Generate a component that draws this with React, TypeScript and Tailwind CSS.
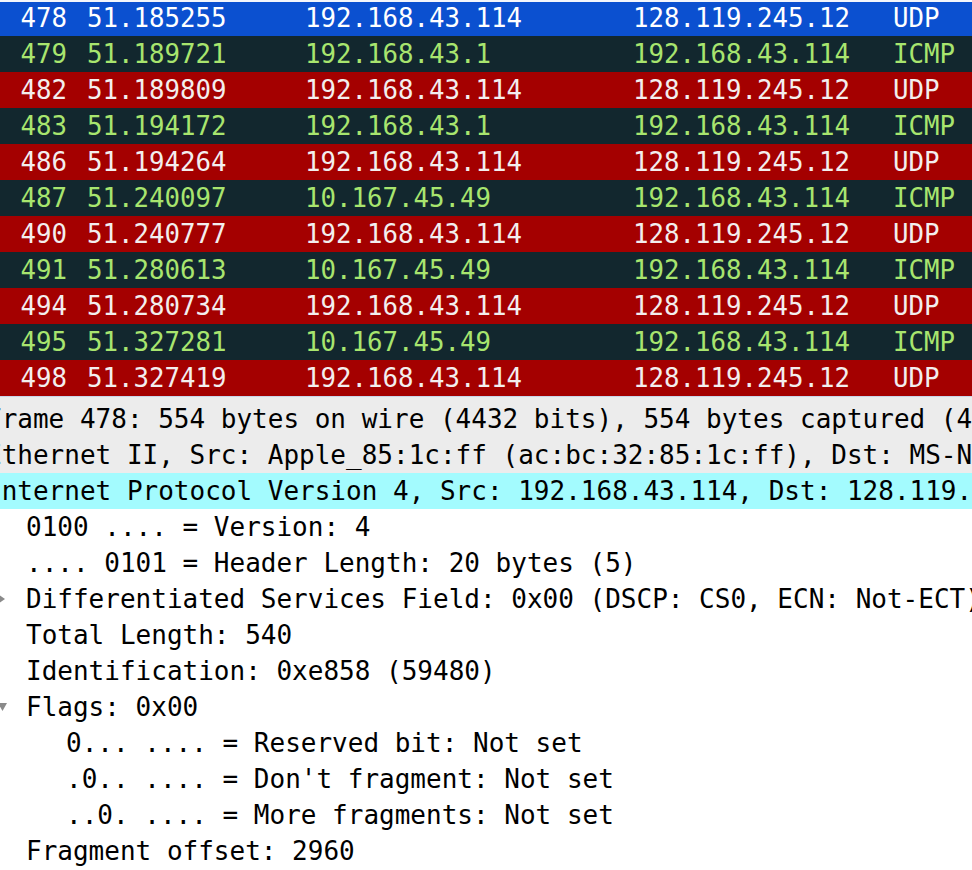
import React from "react";

type Packet = {
  no: string;
  time: string;
  src: string;
  dst: string;
  proto: string;
};

const packets: Packet[] = [
  { no: "478", time: "51.185255", src: "192.168.43.114", dst: "128.119.245.12", proto: "UDP" },
  { no: "479", time: "51.189721", src: "192.168.43.1", dst: "192.168.43.114", proto: "ICMP" },
  { no: "482", time: "51.189809", src: "192.168.43.114", dst: "128.119.245.12", proto: "UDP" },
  { no: "483", time: "51.194172", src: "192.168.43.1", dst: "192.168.43.114", proto: "ICMP" },
  { no: "486", time: "51.194264", src: "192.168.43.114", dst: "128.119.245.12", proto: "UDP" },
  { no: "487", time: "51.240097", src: "10.167.45.49", dst: "192.168.43.114", proto: "ICMP" },
  { no: "490", time: "51.240777", src: "192.168.43.114", dst: "128.119.245.12", proto: "UDP" },
  { no: "491", time: "51.280613", src: "10.167.45.49", dst: "192.168.43.114", proto: "ICMP" },
  { no: "494", time: "51.280734", src: "192.168.43.114", dst: "128.119.245.12", proto: "UDP" },
  { no: "495", time: "51.327281", src: "10.167.45.49", dst: "192.168.43.114", proto: "ICMP" },
  { no: "498", time: "51.327419", src: "192.168.43.114", dst: "128.119.245.12", proto: "UDP" },
];

// tree lines of the packet details pane
type Line = {
  text: string;
  level: number;
  arrow?: "right" | "down";
  bg?: string;
};

const details: Line[] = [
  { text: "Frame 478: 554 bytes on wire (4432 bits), 554 bytes captured (4432 bits) on interface 0", level: 0, bg: "bg-[#ececec]" },
  { text: "Ethernet II, Src: Apple_85:1c:ff (ac:bc:32:85:1c:ff), Dst: MS-NLB-PhysServer", level: 0, bg: "bg-[#ececec]" },
  { text: "Internet Protocol Version 4, Src: 192.168.43.114, Dst: 128.119.245.12", level: 0, bg: "bg-[#a3fbfe]" },
  { text: "0100 .... = Version: 4", level: 1 },
  { text: ".... 0101 = Header Length: 20 bytes (5)", level: 1 },
  { text: "Differentiated Services Field: 0x00 (DSCP: CS0, ECN: Not-ECT)", level: 1, arrow: "right" },
  { text: "Total Length: 540", level: 1 },
  { text: "Identification: 0xe858 (59480)", level: 1 },
  { text: "Flags: 0x00", level: 1, arrow: "down" },
  { text: "0... .... = Reserved bit: Not set", level: 2 },
  { text: ".0.. .... = Don't fragment: Not set", level: 2 },
  { text: "..0. .... = More fragments: Not set", level: 2 },
  { text: "Fragment offset: 2960", level: 1 },
];

const indent = ["ml-[-14px]", "ml-[26px]", "ml-[66px]"];

function rowStyle(i: number, proto: string) {
  if (i === 0) return "bg-[#0b50d0] text-white shadow-[inset_0_2px_0_#f4f6fb]";
  if (proto === "UDP") return "bg-[#a40000] text-[#f3eeee]";
  return "bg-[#12272e] text-[#a8e56e]";
}

const Arrow = ({ dir }: { dir: "right" | "down" }) => (
  <svg width="10" height="12" viewBox="0 0 10 12" className="absolute left-[-2px] top-[12px]">
    {dir === "right" ? (
      <path d="M0 1 L7 6 L0 11 Z" fill="#8a8a8a" />
    ) : (
      <path d="M0 2 L9 2 L4.5 10 Z" fill="#8a8a8a" />
    )}
  </svg>
);

export default function App() {
  return (
    <div
      className="w-[972px] h-[870px] overflow-hidden bg-white text-[25.75px] leading-[36px] whitespace-pre"
      style={{ fontFamily: "'DejaVu Sans Mono', 'Liberation Mono', monospace" }}
    >
      {/* Packet list */}
      <div className="flex flex-col">
        {packets.map((p, i) => (
          <div key={p.no} className={`flex h-[36px] ${rowStyle(i, p.proto)}`}>
            <span className="w-[67px] shrink-0 text-right">{p.no}</span>
            <span className="w-[218px] shrink-0 ml-[20px]">{p.time}</span>
            <span className="w-[328px] shrink-0">{p.src}</span>
            <span className="w-[260px] shrink-0">{p.dst}</span>
            <span className="shrink-0">{p.proto}</span>
          </div>
        ))}
      </div>

      {/* Splitter */}
      <div className="h-[5px] bg-[#ececec] border-t border-[#c9d6ea]" />

      {/* Packet details */}
      <div className="flex flex-col text-black text-[26px]">
        {details.map((l, i) => (
          <div key={i} className={`relative h-[36px] overflow-hidden ${l.bg ?? "bg-white"}`}>
            {l.arrow && <Arrow dir={l.arrow} />}
            <div className={indent[l.level]}>{l.text}</div>
          </div>
        ))}
      </div>
    </div>
  );
}
